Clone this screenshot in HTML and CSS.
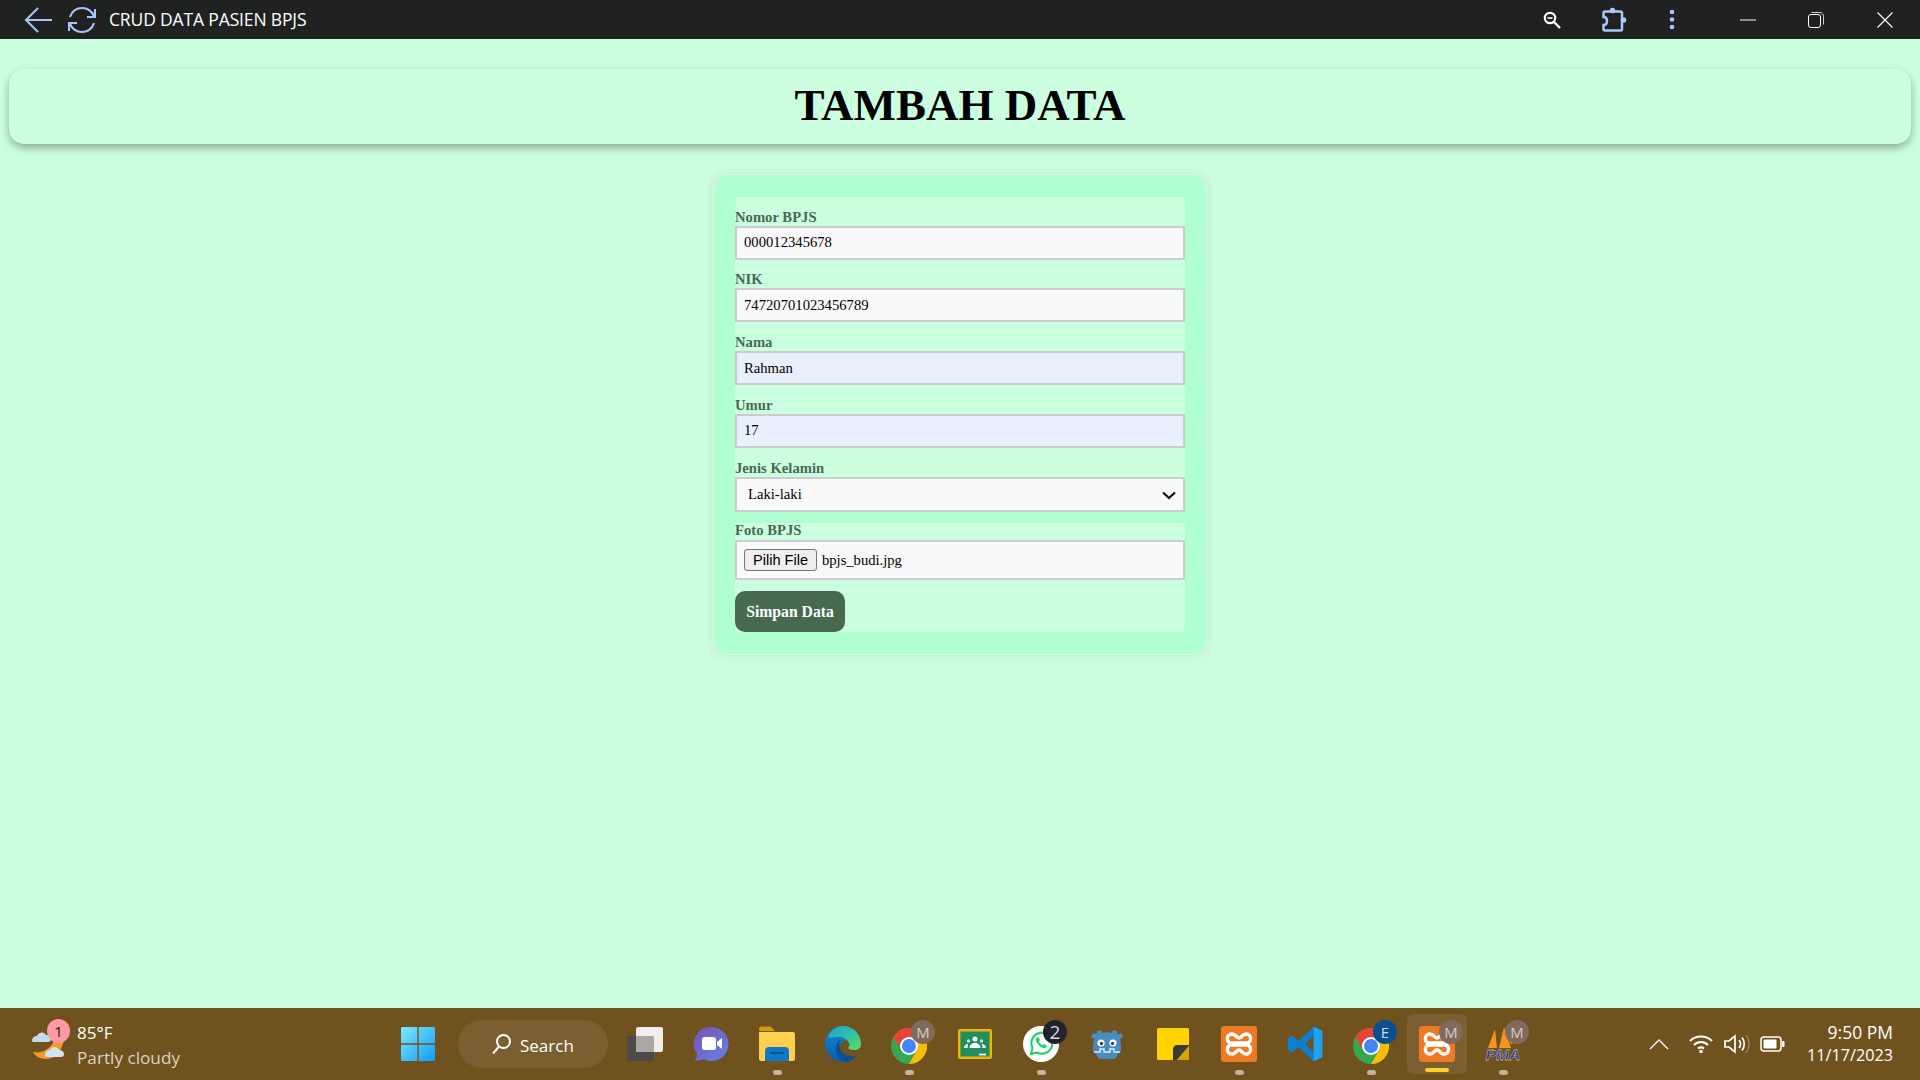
FILE: index.html
```html
<!DOCTYPE html>
<html lang="id">
<head>
<meta charset="utf-8">
<title>CRUD DATA PASIEN BPJS</title>
<link rel="stylesheet" href="styles.css">
</head>
<body>
<header class="titlebar">
  <div class="nav-btn nav-back">
    <svg width="28" height="26" viewBox="0 0 28 26" fill="none" stroke="#a8c7fa" stroke-width="2"><path d="M28 13H2M14 1 2 13l12 12"/></svg>
  </div>
  <div class="nav-btn nav-reload">
    <svg width="30" height="30" viewBox="0 0 30 30" fill="none" stroke="#a8c7fa" stroke-width="2.2"><path d="M3 12C5 6 10 3 15.500 3 20 3 25 6 27 11"/><path d="M28 4v8h-8" stroke-width="2"/><path d="M27 18C25 24 20 27 14.500 27 10 27 5 24 3 19"/><path d="M2 26v-8h8" stroke-width="2"/></svg>
  </div>
  <span class="app-title">CRUD DATA PASIEN BPJS</span>
  <div class="bar-actions">
    <div class="action">
      <svg width="18" height="18" viewBox="0 0 18 18" fill="none" stroke="#fff"><circle cx="7" cy="7" r="5.200" stroke-width="2.200"/><path d="M11 11l6 6" stroke-width="2.400"/><path d="M4.500 7h5" stroke-width="1.600"/></svg>
    </div>
    <div class="action">
      <svg width="26" height="25" viewBox="0 0 26 25" fill="none"><path d="M2.500 6c0-1 .6-1.600 1.600-1.600H19.500c1 0 1.500.6 1.500 1.600v16c0 1-.5 1.500-1.500 1.500H4c-1 0-1.500-.5-1.500-1.500V18c2.500 0 3.500-2 3.500-4s-1-4-3.500-4z" stroke="#a8c7fa" stroke-width="2.500"/><circle cx="11.500" cy="3.500" r="2.700" fill="#a8c7fa"/><circle cx="22.500" cy="13" r="2.800" fill="#a8c7fa"/></svg>
    </div>
    <div class="action">
      <svg width="6" height="21" viewBox="0 0 6 21" fill="#a8c7fa"><circle cx="3" cy="3" r="2.300"/><circle cx="3" cy="10.500" r="2.300"/><circle cx="3" cy="18" r="2.300"/></svg>
    </div>
    <div class="win win-min">
      <svg width="16" height="2" viewBox="0 0 16 2"><path d="M0 1h16" stroke="#fff" stroke-width="1"/></svg>
    </div>
    <div class="win win-restore">
      <svg width="16" height="16" viewBox="0 0 16 16" fill="none" stroke="#fff"><rect x=".5" y="2.500" width="12" height="13" rx="2.500"/><path d="M3.500.5h8c2.500 0 4 1.500 4 4v8" stroke-width=".8"/></svg>
    </div>
    <div class="win win-close">
      <svg width="16" height="16" viewBox="0 0 16 16" stroke="#fff" stroke-width="1.100"><path d="M.5.500l15 15M15.500.500l-15 15"/></svg>
    </div>
  </div>
</header>

<main class="page">
  <div class="page-head"><h1 class="page-title">TAMBAH DATA</h1></div>
  <form class="form-card">
    <div class="form-block form-block-top">
      <div class="field">
        <label class="field-label" for="bpjs">Nomor BPJS</label>
        <input class="field-input" id="bpjs" type="text" value="000012345678">
      </div>
      <div class="field">
        <label class="field-label" for="nik">NIK</label>
        <input class="field-input" id="nik" type="text" value="74720701023456789">
      </div>
      <div class="field">
        <label class="field-label" for="nama">Nama</label>
        <input class="field-input is-autofill" id="nama" type="text" value="Rahman">
      </div>
      <div class="field">
        <label class="field-label" for="umur">Umur</label>
        <input class="field-input is-autofill" id="umur" type="text" value="17">
      </div>
      <div class="field field-last">
        <label class="field-label" for="jk">Jenis Kelamin</label>
        <div class="select-wrap">
          <select class="field-select" id="jk"><option>Laki-laki</option><option>Perempuan</option></select>
          <svg class="select-chevron" width="14" height="9" viewBox="0 0 14 9" fill="none" stroke="#111" stroke-width="2.200"><path d="M1 1.500 7 7l6-5.500"/></svg>
        </div>
      </div>
    </div>
    <div class="form-block">
      <div class="field-label">Foto BPJS</div>
      <div class="file-box">
        <button class="file-btn" type="button">Pilih File</button>
        <span class="file-name">bpjs_budi.jpg</span>
      </div>
      <button class="submit-btn" type="button">Simpan Data</button>
    </div>
  </form>
</main>

<footer class="taskbar">
  <div class="weather">
    <div class="weather-icon">
      <svg width="40" height="42" viewBox="0 0 40 42">
        <path d="M25 14c3 1 6 2 8 1-1 12-8 21-18 21C9 36 4 33 2 29c8 2 18-2 23-15z" fill="#f59a23"/>
        <path d="M1 18c0-3 2-5 5-5 1-4 7-5 9-1 3 0 5 2 5 4 0 2-1 3-3 3H3c-1 0-2-.5-2-1z" fill="#c3d9f2"/>
        <path d="M14 32c0-3 2-5 5-5 1-4 8-4 9 0 3 0 5 2 5 4s-1 3-3 3H16c-1 0-2-1-2-2z" fill="#d3e4f7"/>
      </svg>
      <span class="weather-badge">1</span>
    </div>
    <div class="weather-text">
      <span class="temp">85°F</span>
      <span class="cond">Partly cloudy</span>
    </div>
  </div>

  <div class="slot slot-start">
    <svg width="36" height="36" viewBox="0 0 36 36">
      <defs><linearGradient id="winG" x1="0" y1="0" x2="1" y2="1"><stop offset="0" stop-color="#7ee8fb"/><stop offset="1" stop-color="#0f9cf5"/></linearGradient></defs>
      <path d="M1 2.500C1 1.500 1.500 1 2.500 1H17.300V17.300H1zM18.700 1H33.500C34.500 1 35 1.500 35 2.500V17.300H18.700zM1 18.700H17.300V35H2.500C1.500 35 1 34.500 1 33.500zM18.700 18.700H35V33.500C35 34.500 34.500 35 33.500 35H18.700z" fill="url(#winG)"/>
    </svg>
  </div>

  <div class="search-pill">
    <svg width="20" height="22" viewBox="0 0 20 22" fill="none" stroke="#fff" stroke-width="2"><circle cx="11.500" cy="8.500" r="6.500"/><path d="M7 13.500 1 20.500"/></svg>
    <span class="search-text">Search</span>
  </div>

  <div class="apps">
    <div class="slot">
      <svg width="38" height="36" viewBox="0 0 38 36">
        <rect x="1" y="10" width="27" height="25" rx="2" fill="#4c4a47"/>
        <rect x="10" y="1" width="27" height="25" rx="2" fill="#f1efec"/>
        <rect x="10" y="10" width="18" height="16" rx="1" fill="#aaa8a4"/>
      </svg>
    </div>
    <div class="slot">
      <svg width="36" height="36" viewBox="0 0 36 36">
        <defs><linearGradient id="meetG" x1="0" y1="0" x2="1" y2="1"><stop offset="0" stop-color="#7b52b5"/><stop offset="1" stop-color="#5f84e8"/></linearGradient></defs>
        <path d="M18.500 1a17 17 0 1 1-7 32.500L2 35c1-2 2-5 2-7A17 17 0 0 1 18.500 1z" fill="url(#meetG)"/>
        <rect x="9" y="11" width="14" height="13" rx="2.500" fill="#fff"/>
        <path d="M24 16l5-4v11l-5-4z" fill="#fff"/>
      </svg>
    </div>
    <div class="slot has-dot">
      <svg width="38" height="36" viewBox="0 0 38 36">
        <path d="M1 3c0-1.500 1-2.500 2.500-2.500h9L17 5H1z" fill="#d39b08"/>
        <path d="M1 6h34c1 0 2 1 2 2v25c0 1-1 2-2 2H3c-1 0-2-1-2-2z" fill="#fdd04f"/>
        <path d="M7 35V25c0-2 1-4 4-4h16c3 0 4 2 4 4v10z" fill="#0f78c8"/>
        <path d="M12 27h14" stroke="#0b4f8a" stroke-width="1.800"/>
      </svg>
    </div>
    <div class="slot">
      <svg width="36" height="36" viewBox="0 0 36 36">
        <defs>
          <linearGradient id="edgeA" x1="0" y1="0" x2="1" y2="1"><stop offset="0" stop-color="#1fa0d8"/><stop offset=".6" stop-color="#35c79a"/><stop offset="1" stop-color="#63df60"/></linearGradient>
          <linearGradient id="edgeB" x1="0" y1="0" x2="0" y2="1"><stop offset="0" stop-color="#0f8bd6"/><stop offset="1" stop-color="#0c5ea8"/></linearGradient>
        </defs>
        <path d="M18 0C8 0 0 8 0 18c0 10 8 18 18 18 5 0 10-2 13-6-6 3-11 2-14-1-4-3-4-9-1-12 4-4 10-3 20 1 0-9-8-18-18-18z" fill="url(#edgeB)"/>
        <path d="M3 10C7 3 13 0 18 0c10 0 18 8 18 18 0 4-3 6-7 6-3 0-5-1-6-2 1-1 2-3 1-5-2-4-7-7-12-6-4 0-7 2-9-1z" fill="url(#edgeA)"/>
        <path d="M20 36c-6-2-10-8-9-15 0-3 2-6 5-8-3 4-2 9 1 13 3 3 8 5 14 4-3 4-7 6-11 6z" fill="#0b4f94"/>
      </svg>
    </div>
    <div class="slot has-dot has-badge">
      <svg class="icon-low" width="36" height="36" viewBox="0 0 36 36">
        <circle cx="18" cy="18" r="18" fill="#34a853"/>
        <path d="M18 9H33.590A18 18 0 0 0 2.410 9L10.200 22.500A9 9 0 0 1 18 9Z" fill="#ea4335"/>
        <path d="M18 36A18 18 0 0 0 33.590 9H18A9 9 0 0 1 25.800 22.500Z" fill="#fbbc04"/>
        <circle cx="18" cy="18" r="9" fill="#fff"/><circle cx="18" cy="18" r="7" fill="#4285f4"/>
      </svg>
      <span class="badge badge-m">M</span>
    </div>
    <div class="slot">
      <svg width="34" height="30" viewBox="0 0 34 30">
        <rect x="1.200" y="1.200" width="31.600" height="27.600" rx="1" fill="#1f8f5f" stroke="#f4b400" stroke-width="2.400"/>
        <circle cx="17" cy="10" r="2.500" fill="#fff"/><circle cx="10.500" cy="12" r="1.700" fill="#cfe8d9"/><circle cx="23.500" cy="12" r="1.700" fill="#cfe8d9"/>
        <path d="M11.500 19c0-3 2.500-5 5.500-5s5.500 2 5.500 5zM6 19c0-2 2-4 4-4l-.5 4zM28 19c0-2-2-4-4-4l.5 4z" fill="#fff"/>
        <path d="M21 25.500h7" stroke="#fff" stroke-width="1.800"/>
      </svg>
    </div>
    <div class="slot has-dot has-badge">
      <svg width="36" height="36" viewBox="0 0 36 36">
        <circle cx="18" cy="18" r="18" fill="#fff"/>
        <path d="M8 28l1.500-6A10.500 10.500 0 1 1 14 26.500z" fill="none" stroke="#25d366" stroke-width="2.200"/>
        <path d="M14 11.500c-1 .5-1.500 2-1 3.500 1 3 4 6 7 7 2 .5 3.500-.5 4-2l-3-2-1.500 1c-1.500-.5-3-2-3.500-3.500l1-1.500-1.500-3z" fill="#25d366"/>
      </svg>
      <span class="badge badge-dark">2</span>
    </div>
    <div class="slot">
      <svg width="34" height="32" viewBox="0 0 34 32">
        <path d="M7 3l4-1 1 3c3-1 7-1 10 0l1-3 4 1 .5 3.500L31 5l2 4-3 2c1 3 1 8 1 13-4 0-3 7-8 7H11c-5 0-4-7-8-7 0-5 0-10 1-13L1 9l2-4 3.500 1.500z" fill="#478cbf"/>
        <circle cx="11" cy="15" r="3.600" fill="#fff"/><circle cx="23" cy="15" r="3.600" fill="#fff"/>
        <circle cx="11.500" cy="15.500" r="1.700" fill="#414042"/><circle cx="22.500" cy="15.500" r="1.700" fill="#414042"/>
        <path d="M4 24h6v-3h4v3h6v-3h4v3h6" fill="none" stroke="#dfeaf3" stroke-width="1.400"/>
      </svg>
    </div>
    <div class="slot">
      <svg width="32" height="32" viewBox="0 0 32 32">
        <rect width="32" height="32" rx="1.500" fill="#ffd400"/>
        <path d="M16 32V22c0-2 1-5 4-5h12v1L20 32z" fill="#3b3a38"/>
        <path d="M20 32l12-14v13c0 .5-.5 1-1 1z" fill="#d9a400"/>
      </svg>
    </div>
    <div class="slot has-dot">
      <svg width="36" height="36" viewBox="0 0 36 36">
        <rect width="36" height="36" rx="3" fill="#ef7a25"/>
        <path d="M18 17H10C5 17 5 8 11 8C15 8 15 12 18 12C21 12 21 8 25 8C31 8 31 17 26 17H18M10 19C5 19 5 28 11 28C15 28 15 24 18 24C21 24 21 28 25 28C31 28 31 19 26 19H10" fill="none" stroke="#fff" stroke-width="3.400"/>
      </svg>
    </div>
    <div class="slot">
      <svg width="36" height="36" viewBox="0 0 100 100">
        <path d="M74 2 98 13V87L74 98 32 58 13 73 2 66V34L13 27 32 42zM74 27 50 50 74 73z" fill="#0c7fd1" fill-rule="evenodd"/>
        <path d="M74 2 98 13V87L74 98z" fill="#1fa3f1"/>
      </svg>
    </div>
    <div class="slot has-dot has-badge">
      <svg class="icon-low" width="36" height="36" viewBox="0 0 36 36">
        <circle cx="18" cy="18" r="18" fill="#34a853"/>
        <path d="M18 9H33.590A18 18 0 0 0 2.410 9L10.200 22.500A9 9 0 0 1 18 9Z" fill="#ea4335"/>
        <path d="M18 36A18 18 0 0 0 33.590 9H18A9 9 0 0 1 25.800 22.500Z" fill="#fbbc04"/>
        <circle cx="18" cy="18" r="9" fill="#fff"/><circle cx="18" cy="18" r="7" fill="#4285f4"/>
      </svg>
      <span class="badge badge-e">E</span>
    </div>
    <div class="slot is-active has-badge">
      <svg width="36" height="36" viewBox="0 0 36 36">
        <rect width="36" height="36" rx="3" fill="#ef7a25"/>
        <path d="M18 17H10C5 17 5 8 11 8C15 8 15 12 18 12C21 12 21 8 25 8C31 8 31 17 26 17H18M10 19C5 19 5 28 11 28C15 28 15 24 18 24C21 24 21 28 25 28C31 28 31 19 26 19H10" fill="none" stroke="#fff" stroke-width="3.400"/>
      </svg>
      <span class="badge badge-m">M</span>
      <span class="active-bar"></span>
    </div>
    <div class="slot has-dot has-badge">
      <svg width="38" height="36" viewBox="0 0 38 36">
        <path d="M4 22 11 3l2 19zM15 22l5-21 7 21zM23 11l7 3 5 2-8 2z" fill="#f7941d"/>
        <text class="pma" x="19" y="34" text-anchor="middle">PMA</text>
      </svg>
      <span class="badge badge-m">M</span>
    </div>
  </div>

  <div class="tray">
    <svg class="tray-chev" width="20" height="12" viewBox="0 0 20 12" fill="none" stroke="#fff" stroke-width="1.300"><path d="M1 11 10 2l9 9"/></svg>
    <svg class="tray-wifi" width="24" height="20" viewBox="0 0 24 20" fill="none" stroke="#fff" stroke-width="2"><path d="M1 7c6-6 16-6 22 0M5 11c4-4 10-4 14 0M9 14.500c2-1.500 4-1.500 6 0"/><circle cx="12" cy="17.500" r="1.800" fill="#fff" stroke="none"/></svg>
    <svg class="tray-vol" width="26" height="20" viewBox="0 0 26 20" fill="none" stroke="#fff" stroke-width="1.700"><path d="M1 7h4l6-5v16l-6-5H1z"/><path d="M15 6c2 2 2 6 0 8M18 3.500c3 3.500 3 9.500 0 13"/><path d="M22 1c4 5 4 13 0 18" stroke="#a89a80" stroke-width="1"/></svg>
    <svg class="tray-bat" width="25" height="16" viewBox="0 0 25 16"><rect x="1" y="1" width="20" height="14" rx="3" fill="none" stroke="#fff" stroke-width="1.500"/><rect x="3.500" y="3.500" width="13" height="9" rx="1" fill="#fff"/><rect x="22" y="5" width="2.500" height="6" rx="1" fill="#fff"/></svg>
    <div class="clock"><span class="clock-time">9:50 PM</span><span class="clock-date">11/17/2023</span></div>
  </div>
</footer>
</body>
</html>
```
FILE: styles.css
```css
* { box-sizing: border-box; }
html, body { height: 100%; }
body {
  margin: 0;
  display: flex;
  flex-direction: column;
  height: 100vh;
  overflow: hidden;
  background: #ccffe0;
  font-family: "Liberation Serif", serif;
}

/* title bar */
.titlebar {
  flex: none;
  height: 39px;
  display: flex;
  align-items: center;
  background: #202222;
  color: #fff;
}
.nav-btn { display: flex; align-items: center; }
.nav-btn svg { display: block; }
.nav-back { margin-left: 24px; }
.nav-reload { margin-left: 15px; }
.app-title {
  margin-left: 12px;
  margin-bottom: 2px;
  font: 17.5px "Open Sans", sans-serif;
  letter-spacing: -0.15px;
}
.bar-actions { margin-left: auto; display: flex; align-items: center; height: 100%; }
.action, .win { height: 100%; display: flex; align-items: center; justify-content: center; }
.action { width: 58px; }
.action:nth-child(2) { margin-left: 4px; }
.win { width: 68px; }
.win-min { margin-left: 13px; }
.win-close { width: 70px; }

/* page */
.page {
  flex: 1;
  min-height: 0;
  padding: 30px 9px 0;
  display: flex;
  flex-direction: column;
  align-items: center;
}
.page-head {
  align-self: stretch;
  height: 75px;
  padding-bottom: 4px;
  display: flex;
  align-items: center;
  justify-content: center;
  background: #ccffe0;
  border-radius: 15px;
  box-shadow: 0 4px 8px rgba(0, 0, 0, .32);
}
.page-title {
  margin: 0;
  font-size: 45px;
  font-weight: 700;
  color: #000;
}
.form-card {
  margin-top: 30px;
  width: 494px;
  padding: 22px 21px;
  display: flex;
  flex-direction: column;
  gap: 11px;
  background: #b0ffd0;
  border: 1px solid #dff4e8;
  border-radius: 14px;
  box-shadow: 0 0 10px rgba(0, 0, 0, .1);
}
.form-block { background: #ccffe0; display: flex; flex-direction: column; align-items: stretch; }
.form-block-top { padding-top: 12.500px; }
.field { margin-bottom: 12.750px; display: flex; flex-direction: column; }
.field-last { margin-bottom: 0; }
.field-label {
  display: block;
  height: 16px;
  font-size: 14.670px;
  line-height: 15px;
  font-weight: 700;
  color: #466a4f;
}
.field-input, .field-select {
  display: block;
  width: 100%;
  margin: 0;
  height: 34px;
  padding: 0 7px;
  border: 2px solid #ccc;
  border-radius: 0;
  outline: 0;
  background: #f9f9f9;
  color: #000;
  font: 14.670px "Liberation Serif", serif;
}
.select-wrap { position: relative; }
.field-select { height: 35px; padding-left: 11px; appearance: none; }
.select-chevron { position: absolute; right: 9px; top: 14px; }
.is-autofill { background: #e8f0fe; }

.file-box {
  margin-top: 1.500px;
  height: 40px;
  padding: 0 7px;
  display: flex;
  align-items: center;
  gap: 5px;
  background: #f9f9f9;
  border: 2px solid #ccc;
}
.file-btn {
  width: 73px;
  height: 22px;
  padding: 0;
  background: #efefef;
  border: 1px solid #767676;
  border-radius: 3px;
  color: #000;
  font: 14.600px "Liberation Sans", sans-serif;
}
.file-name { font-size: 14.600px; color: #000; }
.submit-btn {
  margin-top: 11px;
  align-self: flex-start;
  width: 110px;
  height: 41px;
  padding: 0;
  border: 0;
  border-radius: 10px;
  background: #46694f;
  color: #fff;
  font: 700 15.700px "Liberation Serif", serif;
}

/* taskbar */
.taskbar {
  flex: none;
  height: 72px;
  display: flex;
  align-items: center;
  background: #70521f;
  color: #fff;
  font-family: "Open Sans", sans-serif;
}
.weather { width: 385px; padding-left: 31px; display: flex; align-items: center; }
.weather-icon { position: relative; width: 46px; height: 42px; }
.weather-icon svg { display: block; }
.weather-badge {
  position: absolute;
  left: 16px;
  top: -4px;
  width: 23px;
  height: 24px;
  border-radius: 50%;
  background: #ff9aa5;
  color: #1a1a1a;
  font-size: 15px;
  line-height: 24px;
  text-align: center;
}
.weather-text { display: flex; flex-direction: column; gap: 2px; padding-top: 2px; }
.temp { font-size: 17px; line-height: 23px; }
.cond { font-size: 17.200px; line-height: 23px; color: #dcd3c3; }

.slot {
  position: relative;
  flex: none;
  width: 66px;
  height: 60px;
  display: flex;
  align-items: center;
  justify-content: center;
}
.slot svg { display: block; }
.icon-low { margin-top: 3px; }
.search-pill {
  flex: none;
  margin-left: 7px;
  width: 150px;
  height: 48px;
  padding-left: 34px;
  display: flex;
  align-items: center;
  gap: 8px;
  border-radius: 24px;
  background: rgba(255, 255, 255, .08);
  font-size: 17px;
}
.search-text { padding-top: 2px; }
.apps { display: flex; margin-left: 4px; }
.has-dot::after {
  content: "";
  position: absolute;
  left: 28.500px;
  bottom: -1px;
  width: 9px;
  height: 5px;
  border-radius: 3px;
  background: #c4b29a;
}
.badge {
  position: absolute;
  top: 6px;
  left: 35px;
  width: 24px;
  height: 24px;
  border-radius: 50%;
  text-align: center;
  font-size: 15px;
  line-height: 24px;
}
.badge-m { background: #7f6a5c; color: #d6ccc4; }
.badge-e { background: #0b4f91; color: #c9def3; }
.badge-dark { background: #22222c; color: #d8d8d8; font-size: 19px; }
.is-active { background: rgba(255, 255, 255, .08); border-radius: 6px; }
.is-active.slot { width: 60px; margin: 0 3px; }
.is-active .badge { left: 32px; }
.active-bar {
  position: absolute;
  left: 18px;
  bottom: 2px;
  width: 24px;
  height: 4px;
  border-radius: 2px;
  background: #ffd42a;
}
.pma { font: italic 700 15.500px "Liberation Sans", sans-serif; fill: #2a2f6b; stroke: #fff; stroke-width: .3px; }

.tray { margin-left: auto; padding-right: 27px; display: flex; align-items: center; }
.tray svg { display: block; flex: none; }
.tray-chev { margin-right: 1px; }
.tray-wifi { margin-left: 19px; }
.tray-vol { margin-left: 11px; }
.tray-bat { margin-left: 10px; }
.clock {
  margin-left: 20px;
  width: 88px;
  display: flex;
  flex-direction: column;
  align-items: flex-end;
  gap: 1px;
  margin-top: -1px;
  line-height: 22px;
}
.clock-time { font-size: 17.500px; }
.clock-date { font-size: 16.200px; }
```
